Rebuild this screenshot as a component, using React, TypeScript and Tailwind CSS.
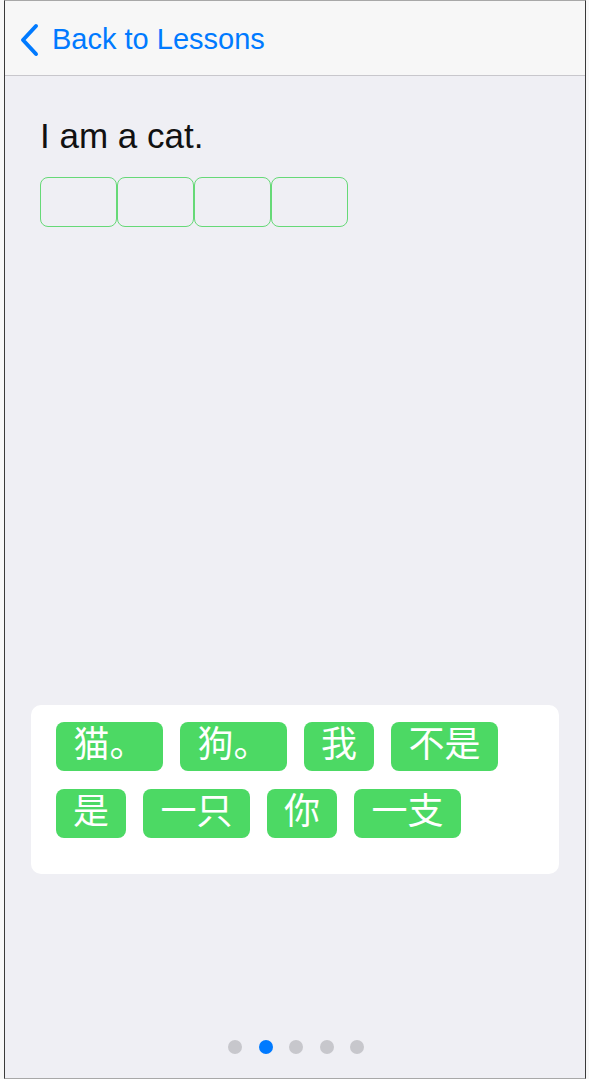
import * as React from "react";

const words = ["猫。", "狗。", "我", "不是", "是", "一只", "你", "一支"];

const Tile = ({ text }: { text: string }) => (
  <div
    className={`flex h-[49px] items-center justify-center rounded-[8px] bg-[#4cd964] pb-[3px] text-[36px] leading-none text-white ${
      text.length > 1 ? "w-[107px]" : "w-[70px]"
    }`}
  >
    {text}
  </div>
);

const App = () => {
  return (
    <div
      className="h-[1079px] w-[589px] bg-[#f8f8f8] pl-[4px]"
      style={{ fontFamily: '"Liberation Sans", "Noto Sans CJK SC", sans-serif' }}
    >
      <div className="flex h-[1079px] w-[582px] flex-col border-x border-t border-b border-x-[#3a3a3a] border-t-[#a8a8a8] border-b-[#a8a8a8] bg-[#efeff4]">
        <div className="flex h-[75px] shrink-0 items-center border-b border-[#c8c7cc] bg-[#f7f7f7] pl-[13px] pt-[3px]">
          <svg width="22" height="34" viewBox="0 0 22 34">
            <path
              d="M18 3 L5 17 L18 31"
              fill="none"
              stroke="#007aff"
              strokeWidth="4"
              strokeLinecap="round"
              strokeLinejoin="round"
            />
          </svg>
          <span className="ml-[12px] text-[29px] text-[#007aff]">Back to Lessons</span>
        </div>

        <div className="flex flex-1 flex-col">
          <div className="pl-[35px] pt-[40px]">
            <p className="text-[35px] leading-[40px] text-[#111]">I am a cat.</p>
            <div className="mt-[21px] flex">
              {[0, 1, 2, 3].map((i) => (
                <div
                  key={i}
                  className="h-[50px] w-[77px] rounded-[8px] border-[1.5px] border-[#66d977]"
                />
              ))}
            </div>
          </div>

          <div className="mx-[26px] mt-auto flex flex-wrap gap-x-[17px] gap-y-[18px] rounded-[10px] bg-white pb-[36px] pl-[25px] pr-[20px] pt-[17px]">
            {words.map((w) => (
              <Tile key={w} text={w} />
            ))}
          </div>

          <div className="mb-[24px] mt-[166px] flex justify-center gap-[16.5px] pl-[2px]">
            {[0, 1, 2, 3, 4].map((i) => (
              <div
                key={i}
                className={`h-[14px] w-[14px] rounded-full ${i === 1 ? "bg-[#007aff]" : "bg-[#c7c7cc]"}`}
              />
            ))}
          </div>
        </div>
      </div>
    </div>
  );
};

export default App;
